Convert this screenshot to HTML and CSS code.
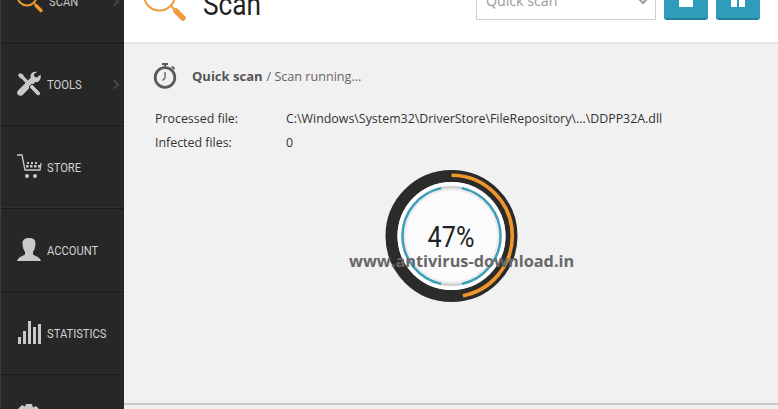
FILE: index.html
```html
<!DOCTYPE html>
<html lang="en">
<head>
    <title>Scan</title>
    <link rel="stylesheet" href="styles.css">
</head>
<body>
    <div class="app">
        <div class="sidebar">
            <div class="nav-item">
                <svg class="nav-icon" width="28" height="28" viewBox="0 0 28 28"><circle cx="11" cy="9" r="9.5" fill="none" stroke="#ee9a2c" stroke-width="2"/><path d="M18 16l7 7" stroke="#ee9a2c" stroke-width="1.6"/><path d="M20 18.500l5 5" stroke="#ee9a2c" stroke-width="3.400" stroke-linecap="round"/></svg>
                <span class="nav-label active-label">SCAN</span>
                <span class="nav-arrow"></span>
            </div>
            <div class="nav-item">
                <svg class="nav-icon" width="26" height="26" viewBox="0 0 26 26" fill="#c9c9c9"><path d="M2 4l2-2 3 1.500 1 2L22 20l-2.500 2.500L6 8 4 7z"/><path d="M24.500 3.500l-3.500 3-2.500-.8-.7-2.400L21 1c-3-1-6.500 1-6.500 4.200 0 1 .2 1.500.2 1.500L2 19.500c-1.500 1.600-.9 3.700.2 4.600 1.300 1 3.200 1 4.400-.2L19.300 11c3.500 1 6.400-2.800 5.200-7.500z" fill="#c9c9c9"/><path d="M13 16l3-3 8 8c1 1.500.6 2.300-.5 3.200-1 .8-2 .6-3-.2z" fill="#c9c9c9" stroke="#272727" stroke-width="1"/></svg>
                <span class="nav-label">TOOLS</span>
                <span class="nav-arrow"></span>
            </div>
            <div class="nav-item">
                <svg class="nav-icon" width="26" height="26" viewBox="0 0 26 26" fill="#c9c9c9"><path d="M1 1h5l3 15h15l1-7" fill="none" stroke="#c9c9c9" stroke-width="1.300"/><path d="M11 8h2v2h-2zM15 8h2v2h-2zM19 8h2v2h-2zM10 11h2.500v2.500H10zM14 11h2.500v2.500H14zM18 11h2.500v2.500H18zM22 11h2v2.500h-2z"/><circle cx="11" cy="22" r="2"/><circle cx="19" cy="22" r="2"/></svg>
                <span class="nav-label">STORE</span>
            </div>
            <div class="nav-item">
                <svg class="nav-icon" width="26" height="26" viewBox="0 0 26 26" fill="#c9c9c9"><path d="M13 1c4 0 6.500 1.500 6.500 5.500 0 3-1 6.500-2.500 8.500v2.500c2 1.500 7 2.500 8 6.500H1c1-4 6-5 8-6.500V15C7.500 13 6.500 9.500 6.500 6.500 6.500 2.500 9 1 13 1z"/></svg>
                <span class="nav-label">ACCOUNT</span>
            </div>
            <div class="nav-item">
                <svg class="nav-icon" width="26" height="26" viewBox="0 0 26 26" fill="#c9c9c9"><rect x="2" y="17" width="3" height="7"/><rect x="7" y="11" width="3" height="13"/><rect x="12" y="1" width="3" height="23"/><rect x="17" y="7" width="3" height="17"/><rect x="22" y="4" width="3" height="20"/></svg>
                <span class="nav-label">STATISTICS</span>
            </div>
            <div class="nav-item">
                <svg class="nav-icon" width="26" height="26" viewBox="0 0 26 26" fill="#c9c9c9"><path d="M10 1h6l1 3.500 3-1.500 4 4-1.500 3 3.500 1v6l-3.500 1 1.500 3-4 4-3-1.500-1 3.500h-6l-1-3.500-3 1.500-4-4 1.500-3L0 16v-6l3.500-1L2 6l4-4 3 1.500z"/><circle cx="13" cy="13" r="4" fill="#272727"/></svg>
                <span class="nav-label">SETTINGS</span>
            </div>
        </div>

        <div class="main">
            <div class="top-bar">
                <svg class="title-icon" width="44" height="44" viewBox="0 0 44 44"><circle cx="16.500" cy="16" r="15.500" fill="none" stroke="#f09a3e" stroke-width="2"/><path d="M28 27l12 12" stroke="#f09a3e" stroke-width="2"/><path d="M33 32l7 7" stroke="#f09a3e" stroke-width="5.500" stroke-linecap="round"/></svg>
                <h1 class="title"><span>Scan</span></h1>
                <div class="select-box">
                    <span>Quick scan</span>
                    <svg width="12" height="8" viewBox="0 0 12 8"><path d="M1.500 1.500L6 6l4.500-4.500" fill="none" stroke="#999" stroke-width="2"/></svg>
                </div>
                <button class="action-button"><span class="stop-icon"></span></button>
                <button class="action-button"><span class="pause-icon"></span><span class="pause-icon"></span></button>
            </div>

            <div class="content">
                <div class="scan-head">
                    <svg class="timer-icon" width="24" height="26" viewBox="0 0 24 26"><path d="M9 1h6M12 1v4M19 3.500l2.500 2.500" fill="none" stroke="#5a5a5a" stroke-width="2"/><circle cx="12" cy="14.500" r="9.800" fill="none" stroke="#5a5a5a" stroke-width="2.800"/><path d="M12 15V9M12 15l-2.500 2.500" fill="none" stroke="#5a5a5a" stroke-width="1.300"/></svg>
                    <span class="scan-name">Quick scan</span>
                    <span class="scan-state">/ Scan running...</span>
                </div>
                <div class="info-row">
                    <span class="info-label">Processed file:</span>
                    <span>C:\Windows\System32\DriverStore\FileRepository\...\DDPP32A.dll</span>
                </div>
                <div class="info-row">
                    <span class="info-label">Infected files:</span>
                    <span>0</span>
                </div>
                <div class="progress">
                    <svg width="134" height="134" viewBox="-0.5 0 134 134">
                        <circle cx="67" cy="67" r="60" fill="none" stroke="#2b2b2b" stroke-width="12"/>
                        <circle cx="67" cy="67" r="60.800" fill="none" stroke="#f0962a" stroke-width="3.600" pathLength="100" stroke-dasharray="47 53" transform="rotate(-90 67 67)"/>
                        <circle cx="67" cy="67" r="54" fill="#fff"/>
                        <circle cx="67" cy="67" r="47" fill="#fbfbfb" stroke="#ececec" stroke-width="3"/>
                        <circle cx="67" cy="67" r="49" fill="none" stroke="#cfcfcf" stroke-width="2.400"/>
                        <circle cx="67" cy="67" r="49" fill="none" stroke="#3a9fbd" stroke-width="2.400" pathLength="100" stroke-dasharray="43.200 6.800" stroke-dashoffset="-3.400" transform="rotate(-90 67 67)"/>
                    </svg>
                    <span class="percent">47%</span>
                </div>
                <div class="watermark">www.antivirus-download.in</div>
            </div>
            <div class="bottom-line"></div>
        </div>
    </div>
</body>
</html>
```

FILE: styles.css
```css
html, body {
    margin: 0;
    height: 409px;
    overflow: hidden;
}

body {
    font-family: "Open Sans", Arial, sans-serif;
    font-size: 12.4px;
    color: #333;
    background-color: #f1f1f1;
}

.app {
    display: flex;
    height: 409px;
    overflow: hidden;
}

.sidebar {
    flex: 0 0 123px;
    height: 498px;
    margin-top: -40px;
    background-color: #272727;
    border-left: 1px solid #3d3d3d;
}

.nav-item {
    position: relative;
    display: flex;
    align-items: center;
    box-sizing: border-box;
    height: 83px;
    padding-left: 15px;
    border-bottom: 1px solid #1a1a1a;
    box-shadow: inset 0 -1px 0 #2f2f2f;
}

.nav-icon {
    flex: 0 0 26px;
    margin-right: 5px;
    overflow: visible;
}

.nav-label {
    font-family: Roboto, Arial, sans-serif;
    font-size: 13px;
    color: #d2d2d2;
    transform: scaleX(0.86);
    transform-origin: left center;
}

.active-label {
    color: #c9c9c9;
}

.nav-arrow {
    position: absolute;
    right: 6px;
    top: 38px;
    width: 5px;
    height: 5px;
    border-top: 2px solid #444;
    border-right: 2px solid #444;
    transform: rotate(45deg);
}

.main {
    flex: 1;
    min-width: 0;
    display: flex;
    flex-direction: column;
}

.top-bar {
    display: flex;
    align-items: flex-end;
    flex: 0 0 44px;
    min-height: 0;
    padding: 0 18px 22px 19px;
    box-sizing: border-box;
    background-color: #fff;
    border-bottom: 2px solid #e6e6e6;
}

.title-icon {
    flex: 0 0 44px;
    margin-bottom: -3px;
}

.title {
    flex: 1;
    margin: 0 0 0 16px;
    font-family: Roboto, Arial, sans-serif;
    font-size: 32px;
    font-weight: 400;
    line-height: 32px;
    color: #222;
}

.title span {
    display: inline-block;
    transform: scaleX(0.82);
    transform-origin: left center;
}

.select-box {
    display: flex;
    align-items: center;
    justify-content: space-between;
    box-sizing: border-box;
    width: 180px;
    height: 40px;
    margin-right: 8px;
    padding: 12px 6px 0 9px;
    border: 1px solid #d0d0d0;
    background-color: #fff;
    font-size: 14.2px;
    color: #999;
}

.select-box span {
    position: relative;
    top: -6px;
}

.select-box svg {
    position: relative;
    top: -5px;
}

.action-button {
    display: flex;
    align-items: flex-end;
    justify-content: center;
    gap: 2px;
    box-sizing: border-box;
    width: 44px;
    height: 40px;
    margin-left: 8px;
    padding: 0 0 11px;
    border: none;
    border-bottom: 2px solid #25819b;
    border-radius: 3px;
    background-color: #2f9dba;
}

.select-box + .action-button {
    margin-left: 0;
}

.stop-icon {
    width: 14px;
    height: 20px;
    background-color: #fff;
}

.pause-icon {
    width: 6px;
    height: 20px;
    background-color: #fff;
}

.content {
    position: relative;
    flex: 1;
    padding: 19px 0 0 31px;
}

.scan-head {
    display: flex;
    align-items: center;
    height: 26px;
    margin-bottom: 18px;
    color: #555;
}

.timer-icon {
    margin-left: -2px;
}

.scan-name {
    margin-left: 15px;
    font-size: 13px;
    font-weight: 700;
}

.scan-state {
    margin-left: 4px;
    font-size: 12.6px;
    color: #666;
}

.info-row {
    display: flex;
    height: 24px;
    line-height: 24px;
    color: #333;
}

.info-label {
    flex: 0 0 131px;
}

.progress {
    position: absolute;
    left: 260px;
    top: 125px;
    width: 134px;
    height: 134px;
}

.progress svg {
    display: block;
}

.percent {
    position: absolute;
    left: 0;
    right: 0;
    top: 51px;
    text-align: center;
    font-family: Roboto, Arial, sans-serif;
    font-size: 30px;
    font-weight: 400;
    line-height: 34px;
    color: #222;
    transform: scaleX(0.84);
}

.watermark {
    position: absolute;
    left: 225px;
    top: 206px;
    font-family: "Open Sans", Arial, sans-serif;
    font-size: 16.3px;
    font-weight: 700;
    line-height: 22px;
    white-space: nowrap;
    color: #686868;
}

.bottom-line {
    flex: 0 0 2px;
    margin-bottom: 4px;
    background-color: #c8c8c8;
}
```
